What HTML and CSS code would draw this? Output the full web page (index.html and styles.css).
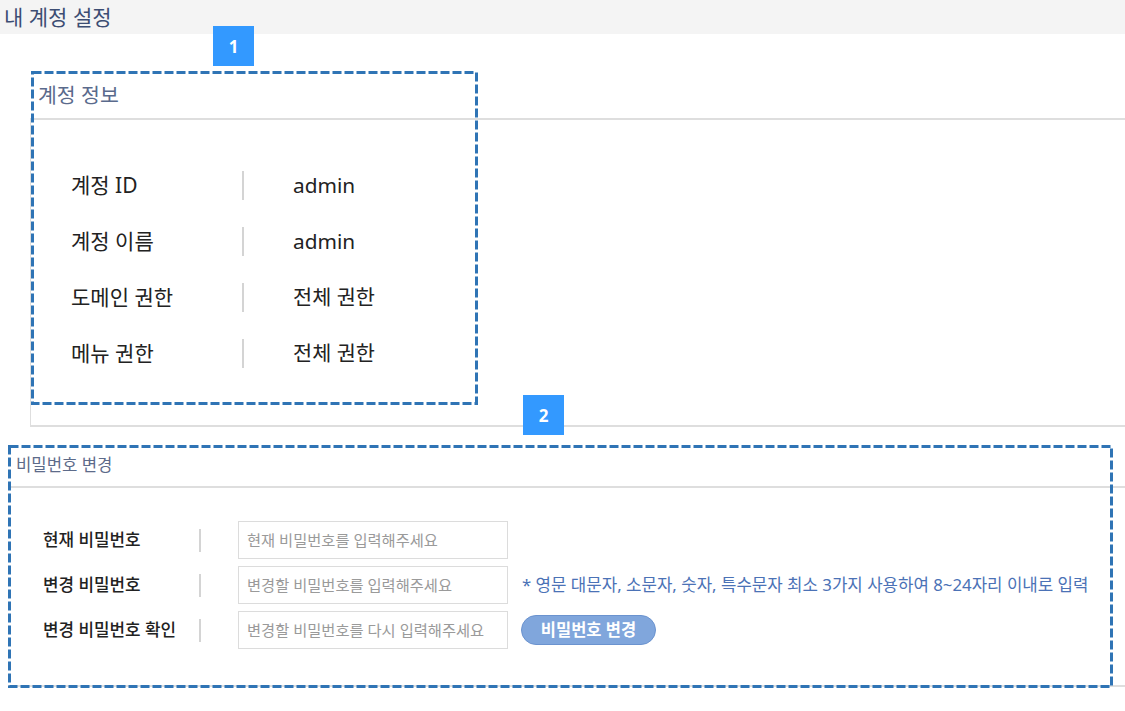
FILE: index.html
```html
<!DOCTYPE html>
<html lang="ko">
<head>
<meta charset="utf-8">
<title>내 계정 설정</title>
<link rel="stylesheet" href="styles.css">
</head>
<body>
<div class="page">
  <header class="topbar"><h1 class="page-title">내 계정 설정</h1></header>

  <section class="account">
    <div class="sec-head"><h2 class="sec-title">계정 정보</h2></div>
    <div class="account-body">
      <div class="info-row"><span class="info-label">계정 ID</span><span class="bar"></span><span class="info-value">admin</span></div>
      <div class="info-row"><span class="info-label">계정 이름</span><span class="bar"></span><span class="info-value">admin</span></div>
      <div class="info-row"><span class="info-label">도메인 권한</span><span class="bar"></span><span class="info-value">전체 권한</span></div>
      <div class="info-row"><span class="info-label">메뉴 권한</span><span class="bar"></span><span class="info-value">전체 권한</span></div>
    </div>
  </section>

  <section class="password">
    <div class="sec-head pw-head"><h2 class="sec-title small">비밀번호 변경</h2></div>
    <div class="pw-body">
      <div class="pw-row">
        <span class="pw-label">현재 비밀번호</span><span class="bar small"></span>
        <input class="pw-input" type="password" placeholder="현재 비밀번호를 입력해주세요">
      </div>
      <div class="pw-row">
        <span class="pw-label">변경 비밀번호</span><span class="bar small"></span>
        <input class="pw-input" type="password" placeholder="변경할 비밀번호를 입력해주세요">
        <span class="hint">* 영문 대문자, 소문자, 숫자, 특수문자 최소 3가지 사용하여 8~24자리 이내로 입력</span>
      </div>
      <div class="pw-row">
        <span class="pw-label">변경 비밀번호 확인</span><span class="bar small"></span>
        <input class="pw-input" type="password" placeholder="변경할 비밀번호를 다시 입력해주세요">
        <button class="pw-btn" type="button">비밀번호 변경</button>
      </div>
    </div>
  </section>

  <div class="mark mark-1">
    <svg width="447" height="334" viewBox="0 0 447 334"><rect x="1.5" y="1.5" width="444" height="331" fill="none" stroke="#2f74b5" stroke-width="3" stroke-dasharray="9 3"/></svg>
  </div>
  <div class="badge badge-1">1</div>
  <div class="mark mark-2">
    <svg width="1105" height="243" viewBox="0 0 1105 243"><rect x="1.5" y="1.5" width="1102" height="240" fill="none" stroke="#2f74b5" stroke-width="3" stroke-dasharray="9 3"/></svg>
  </div>
  <div class="badge badge-2">2</div>
</div>
</body>
</html>
```

FILE: styles.css
```css
* { box-sizing: border-box; }
html, body { margin: 0; padding: 0; background: #fff; }
body {
  font-family: "Noto Sans", "Noto Sans CJK KR", sans-serif;
  color: #222;
}
.page { position: relative; width: 1125px; height: 711px; overflow: hidden; }

.topbar {
  height: 34px;
  background: #f4f4f4;
  padding-left: 4px;
  display: flex;
  align-items: center;
}
.page-title {
  margin: 0;
  font-size: 21px;
  font-weight: 400;
  color: #3c4d73;
  line-height: 1;
}

.sec-head {
  display: flex;
  align-items: center;
  border-bottom: 2px solid #dedede;
}
.sec-title {
  margin: 0;
  font-size: 20.5px;
  font-weight: 400;
  color: #5a6a8c;
  line-height: 1;
}
.sec-title.small { font-size: 16.7px; color: #5d6b8a; }

.account { margin: 38px 0 0 30px; }
.account .sec-head { height: 48px; padding-left: 8px; }
.account-body {
  border-left: 1px solid #dedede;
  border-bottom: 2px solid #dedede;
  padding: 37px 0 44px 40px;
}
.info-row {
  height: 56px;
  display: flex;
  align-items: center;
}
.info-label { width: 171px; font-size: 21px; line-height: 1; }
.bar { width: 2px; height: 29px; background: #d4d4d4; }
.info-value { margin-left: 49px; font-size: 20.8px; line-height: 1; }

.password { margin: 0 0 0 8px; }
.pw-head { height: 61px; padding: 18px 0 0 8px; }
.pw-body {
  border-bottom: 2px solid #dedede;
  padding: 33px 0 36px 35px;
  display: flex;
  flex-direction: column;
  gap: 7px;
}
.pw-row { height: 38px; display: flex; align-items: center; }
.pw-label { width: 156px; font-size: 16.9px; font-weight: 500; line-height: 1; color: #222; }
.bar.small { height: 23px; }
.pw-input {
  margin-left: 37px;
  width: 270px;
  height: 38px;
  border: 1px solid #dcdcdc;
  padding: 0 8px;
  font-family: inherit;
  font-size: 15.3px;
  color: #333;
  outline: none;
  background: #fff;
}
.pw-input::placeholder { color: #9a9a9a; }
.hint {
  margin-left: 14px;
  font-size: 16.8px;
  color: #4b72b6;
  line-height: 1;
  white-space: nowrap;
}
.pw-btn {
  margin-left: 13px;
  height: 30px;
  width: 135px;
  border-radius: 15px;
  border: 1px solid #6b93cf;
  background: #80a6dc;
  color: #fff;
  font-family: inherit;
  font-size: 16.5px;
  font-weight: 700;
  padding: 0;
  line-height: 1;
}

.mark { position: absolute; pointer-events: none; }
.mark svg { display: block; }
.mark-1 { left: 31px; top: 71px; }
.mark-2 { left: 8px; top: 445px; }

.badge {
  position: absolute;
  width: 41px;
  height: 40px;
  background: #3399ff;
  color: #fff;
  font-weight: 700;
  font-size: 17px;
  display: flex;
  align-items: center;
  justify-content: center;
  line-height: 1;
}
.badge-1 { left: 213px; top: 26px; }
.badge-2 { left: 523px; top: 395px; }
```
